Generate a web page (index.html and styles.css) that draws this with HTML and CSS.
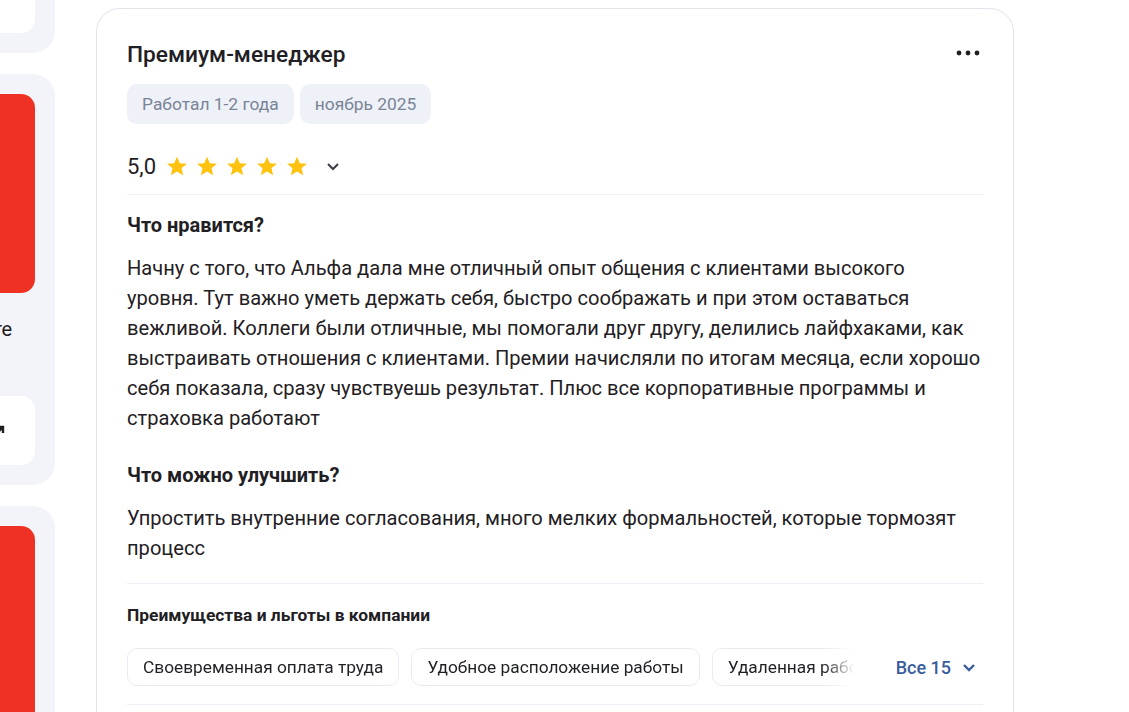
FILE: index.html
```html
<!DOCTYPE html>
<html lang="ru">
<head>
<meta charset="utf-8">
<link rel="stylesheet" href="styles.css">
</head>
<body>
<div class="page">
  <aside class="side">
    <div class="side-block side-block--first">
      <div class="side-white side-white--top"></div>
    </div>
    <div class="side-block">
      <div class="side-red"></div>
      <div class="side-text"><span>Узнайте больше на сайте</span></div>
      <div class="side-white side-white--link">
        <svg class="side-arrow" width="14" height="14" viewBox="0 0 14 14"><path d="M3 11 L11 3 M5 3 H11 V9" fill="none" stroke="#1f1f1f" stroke-width="2.4"/></svg>
      </div>
    </div>
    <div class="side-block side-block--last">
      <div class="side-red side-red--tall"></div>
    </div>
  </aside>

  <main class="card">
    <div class="card-head">
      <h1 class="card-title">Премиум-менеджер</h1>
      <button class="more" aria-label="Ещё">
        <svg width="24" height="6" viewBox="0 0 24 6"><circle cx="3" cy="3" r="2.4" fill="#1f1f1f"/><circle cx="12" cy="3" r="2.4" fill="#1f1f1f"/><circle cx="21" cy="3" r="2.4" fill="#1f1f1f"/></svg>
      </button>
    </div>
    <div class="tags">
      <span class="tag">Работал 1-2 года</span>
      <span class="tag">ноябрь 2025</span>
    </div>
    <div class="rating">
      <span class="rating-value">5,0</span>
      <span class="stars">
        <svg class="star" viewBox="0 0 24 24"><path d="M12 1.8l3.1 7.1 7.7.6-5.9 5 1.8 7.6L12 18l-6.7 4.1 1.8-7.6-5.9-5 7.7-.6z"/></svg>
        <svg class="star" viewBox="0 0 24 24"><path d="M12 1.8l3.1 7.1 7.7.6-5.9 5 1.8 7.6L12 18l-6.7 4.1 1.8-7.6-5.9-5 7.7-.6z"/></svg>
        <svg class="star" viewBox="0 0 24 24"><path d="M12 1.8l3.1 7.1 7.7.6-5.9 5 1.8 7.6L12 18l-6.7 4.1 1.8-7.6-5.9-5 7.7-.6z"/></svg>
        <svg class="star" viewBox="0 0 24 24"><path d="M12 1.8l3.1 7.1 7.7.6-5.9 5 1.8 7.6L12 18l-6.7 4.1 1.8-7.6-5.9-5 7.7-.6z"/></svg>
        <svg class="star" viewBox="0 0 24 24"><path d="M12 1.8l3.1 7.1 7.7.6-5.9 5 1.8 7.6L12 18l-6.7 4.1 1.8-7.6-5.9-5 7.7-.6z"/></svg>
      </span>
      <svg class="rating-chevron" width="14" height="9" viewBox="0 0 14 9"><path d="M2 2 L7 7 L12 2" fill="none" stroke="#3a3d45" stroke-width="2"/></svg>
    </div>

    <section class="section">
      <h2 class="section-title">Что нравится?</h2>
      <p class="section-text">Начну с того, что Альфа дала мне отличный опыт общения с клиентами высокого<br>уровня. Тут важно уметь держать себя, быстро соображать и при этом оставаться вежливой. Коллеги были отличные, мы помогали друг другу, делились лайфхаками, как выстраивать отношения с клиентами. Премии начисляли по итогам месяца, если хорошо себя показала, сразу чувствуешь результат. Плюс все корпоративные программы и страховка работают</p>
      <h2 class="section-title section-title--second">Что можно улучшить?</h2>
      <p class="section-text">Упростить внутренние согласования, много мелких формальностей, которые тормозят процесс</p>
    </section>

    <section class="benefits">
      <h3 class="benefits-title">Преимущества и льготы в компании</h3>
      <div class="benefits-row">
        <div class="benefits-list">
          <span class="benefit">Своевременная оплата труда</span>
          <span class="benefit">Удобное расположение работы</span>
          <span class="benefit">Удаленная работа</span>
          <span class="benefit">ДМС</span>
        </div>
        <button class="all-btn">Все 15
          <svg width="14" height="9" viewBox="0 0 14 9"><path d="M2 2 L7 7 L12 2" fill="none" stroke="#3a5d9c" stroke-width="2.4"/></svg>
        </button>
      </div>
    </section>
  </main>
</div>
</body>
</html>
```

FILE: styles.css
```css
* { box-sizing: border-box; }
html, body { margin: 0; padding: 0; background: #ffffff; }
body {
  font-family: Roboto, "Liberation Sans", Arial, sans-serif;
  color: #1f2024;
  overflow: hidden;
  height: 712px;
}
.page {
  display: flex;
  align-items: flex-start;
  gap: 41px;
}

/* left column (partly off-screen) */
.side {
  width: 275px;
  margin-left: -220px;
  display: flex;
  flex-direction: column;
  gap: 21px;
  flex-shrink: 0;
}
.side-block {
  background: #f3f4fa;
  border-radius: 22px;
  padding: 20px;
  display: flex;
  flex-direction: column;
  overflow: hidden;
}
.side-block--first {
  margin-top: -120px;
  height: 173px;
}
.side-white {
  background: #ffffff;
  border-radius: 14px;
}
.side-white--top { height: 133px; margin-top: auto; }
.side-red {
  background: #ef3124;
  border-radius: 14px;
  height: 199px;
  flex-shrink: 0;
}
.side-red--tall { height: 300px; }
.side-text {
  display: flex;
  justify-content: flex-end;
  font-size: 20px;
  line-height: 24px;
  padding-right: 23px;
  margin-top: 24px;
  white-space: nowrap;
  color: #1f2024;
}
.side-white--link {
  margin-top: 55px;
  height: 69px;
  display: flex;
  align-items: center;
  justify-content: flex-end;
  padding-right: 29px;
}
.side-arrow { display: block; }

/* main card */
.card {
  width: 918px;
  flex-shrink: 0;
  margin-top: 8px;
  height: 760px;
  border: 1px solid #dfe3ec;
  border-radius: 24px;
  padding: 30px 30px 0 30px;
  background: #fff;
}
.card-head {
  display: flex;
  align-items: center;
  justify-content: space-between;
}
.card-title {
  margin: 0;
  font-size: 22.7px;
  line-height: 32px;
  font-weight: 500;
  color: #1f2024;
}
.more {
  border: 0;
  background: none;
  padding: 0;
  margin-right: 3px;
  margin-bottom: 5px;
  display: flex;
}
.tags {
  display: flex;
  gap: 6px;
  margin-top: 13px;
}
.tag {
  background: #eef1f7;
  color: #7a8497;
  font-size: 17.4px;
  line-height: 40px;
  height: 40px;
  padding: 0 15px;
  border-radius: 10px;
}
.rating {
  display: flex;
  align-items: center;
  height: 32px;
  margin-top: 26px;
}
.rating-value {
  font-size: 22px;
  font-weight: 400;
  color: #1f2024;
  margin-right: 10px;
}
.stars { display: flex; gap: 8px; }
.star { width: 22px; height: 22px; fill: #ffc20e; display: block; }
.rating-chevron { margin-left: 18px; display: block; }

.section {
  margin-top: 12px;
  border-top: 1px solid #eef0f5;
  padding-top: 17px;
  padding-bottom: 20px;
}
.section-title {
  margin: 0;
  font-size: 20px;
  line-height: 26px;
  font-weight: 700;
  color: #1f2024;
}
.section-title--second { margin-top: 29px; }
.section-text {
  margin: 15px 0 0 0;
  font-size: 20.1px;
  line-height: 30px;
  color: #1f2024;
}

.benefits {
  border-top: 1px solid #eef0f5;
  border-bottom: 1px solid #eef0f5;
  padding-top: 19px;
  padding-bottom: 18px;
}
.benefits-title {
  margin: 0;
  font-size: 17.4px;
  line-height: 24px;
  font-weight: 700;
  color: #1f2024;
}
.benefits-row {
  display: flex;
  align-items: center;
  margin-top: 21px;
}
.benefits-list {
  width: 727px;
  display: flex;
  gap: 12px;
  overflow: hidden;
  white-space: nowrap;
  -webkit-mask-image: linear-gradient(to right, #000 calc(100% - 30px), transparent 100%);
  mask-image: linear-gradient(to right, #000 calc(100% - 30px), transparent 100%);
}
.benefit {
  flex-shrink: 0;
  border: 1px solid #e8ebf3;
  border-radius: 10px;
  height: 38px;
  line-height: 36px;
  padding: 0 15px;
  font-size: 17.3px;
  color: #1f2024;
}
.all-btn {
  margin-left: auto;
  margin-right: 7px;
  border: 0;
  background: none;
  padding: 0;
  display: flex;
  align-items: center;
  gap: 11px;
  font-family: inherit;
  font-size: 18px;
  font-weight: 500;
  color: #3a5d9c;
}
```
